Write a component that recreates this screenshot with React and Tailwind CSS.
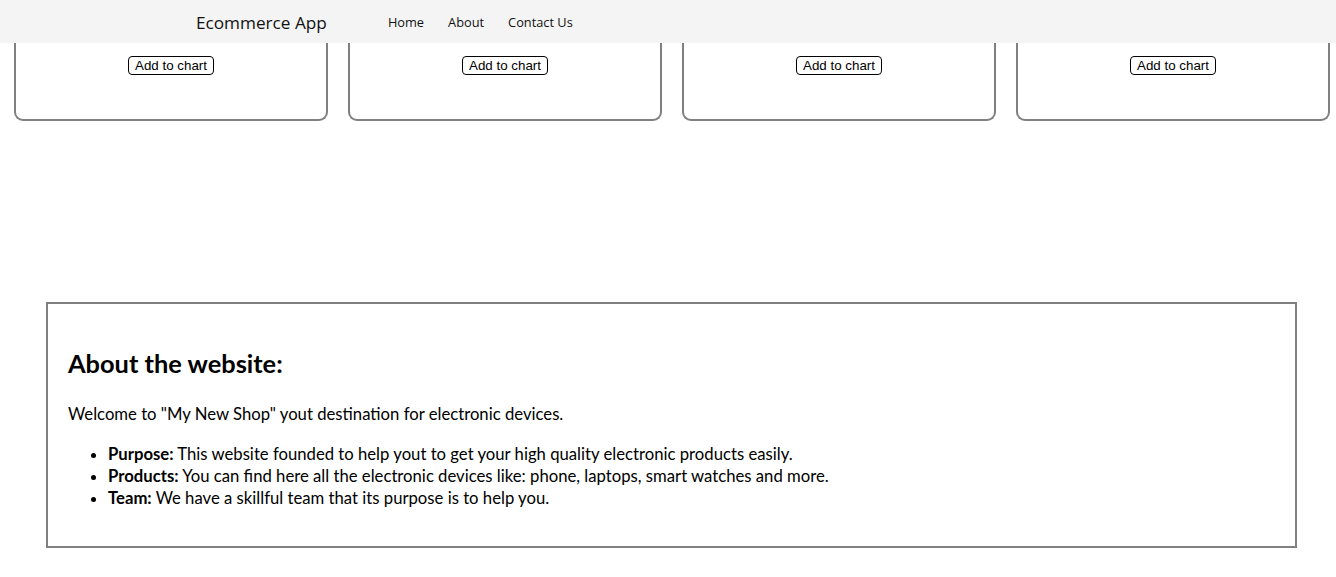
export default function App() {
  const cards = [0, 1, 2, 3];
  return (
    <div className="min-h-[577px] bg-white" style={{ fontFamily: "Lato, 'Liberation Sans', sans-serif" }}>
      <header className="flex h-[43px] items-center bg-[#f4f4f4] pl-[196px] pt-[2px]" style={{ fontFamily: "'Open Sans', 'Noto Sans', sans-serif" }}>
        <div className="text-[17.2px] text-[#111]">Ecommerce App</div>
        <nav className="ml-[61px] flex gap-[24px] text-[12.8px] text-[#111]">
          <a>Home</a>
          <a>About</a>
          <a>Contact Us</a>
        </nav>
      </header>
      <div className="flex gap-5 pl-[14px]">
        {cards.map((c) => (
          <div key={c} className="flex h-[78px] w-[314px] shrink-0 justify-center rounded-b-[9px] border-x-2 border-b-2 border-[#808080] pt-[13px]">
            <button
              className="h-[19px] rounded-[4px] border border-black bg-white px-[6px] text-[13.33px] leading-[15px] text-black"
              style={{ fontFamily: "'Liberation Sans', Arial, sans-serif" }}
            >
              Add to chart
            </button>
          </div>
        ))}
      </div>
      <section className="ml-[46px] mt-[181px] w-[1251px] border-2 border-[#808080] px-[20px] pb-[37px] pt-[45px] text-black">
        <h2 className="text-[25.4px] font-bold leading-[29px]">About the website:</h2>
        <p className="mt-[25px] text-[16.7px] leading-[22px]">Welcome to "My New Shop" yout destination for electronic devices.</p>
        <ul className="mt-[18px] list-disc pl-10 text-[16.7px] leading-[22px]">
          <li><b>Purpose:</b> This website founded to help yout to get your high quality electronic products easily.</li>
          <li><b>Products:</b> You can find here all the electronic devices like: phone, laptops, smart watches and more.</li>
          <li><b>Team:</b> We have a skillful team that its purpose is to help you.</li>
        </ul>
      </section>
    </div>
  );
}
